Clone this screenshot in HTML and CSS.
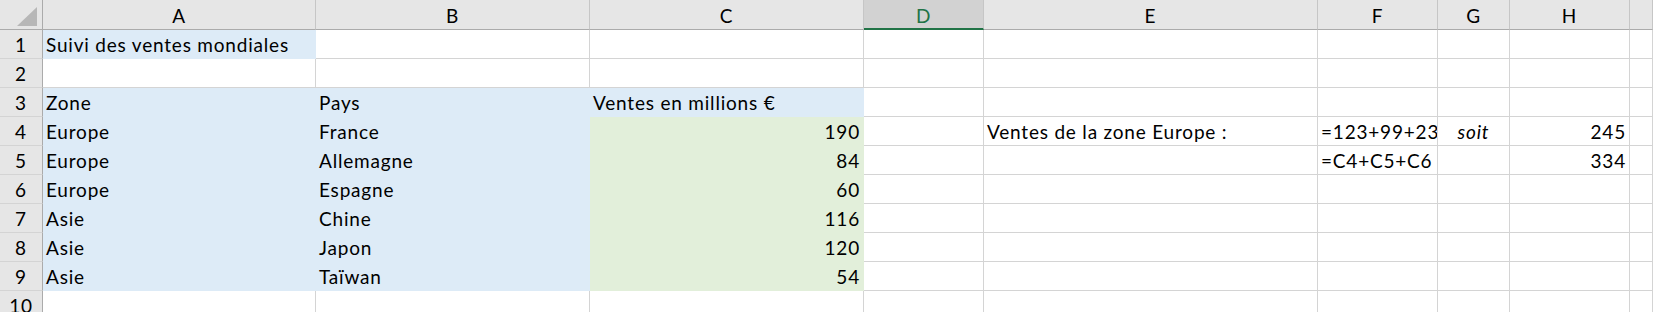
FILE: index.html
```html
<!DOCTYPE html>
<html lang="fr">
<head>
    <meta charset="UTF-8">
    <title>Suivi des ventes mondiales</title>
    <link rel="stylesheet" href="styles.css">
</head>
<body>
    <div class="sheet">
        <!-- column headers -->
        <div class="corner"><span class="corner-mark"></span></div>
        <div class="col-head">A</div>
        <div class="col-head">B</div>
        <div class="col-head">C</div>
        <div class="col-head selected">D</div>
        <div class="col-head">E</div>
        <div class="col-head">F</div>
        <div class="col-head">G</div>
        <div class="col-head">H</div>
        <div class="col-head"></div>

        <!-- 1 -->
        <div class="row-head">1</div>
        <div class="cell blue">Suivi des ventes mondiales</div>
        <div class="cell"></div>
        <div class="cell"></div>
        <div class="cell"></div>
        <div class="cell"></div>
        <div class="cell"></div>
        <div class="cell"></div>
        <div class="cell"></div>
        <div class="cell"></div>

        <!-- 2 -->
        <div class="row-head">2</div>
        <div class="cell"></div>
        <div class="cell"></div>
        <div class="cell"></div>
        <div class="cell"></div>
        <div class="cell"></div>
        <div class="cell"></div>
        <div class="cell"></div>
        <div class="cell"></div>
        <div class="cell"></div>

        <!-- 3 -->
        <div class="row-head">3</div>
        <div class="cell blue">Zone</div>
        <div class="cell blue">Pays</div>
        <div class="cell blue">Ventes en millions €</div>
        <div class="cell"></div>
        <div class="cell"></div>
        <div class="cell"></div>
        <div class="cell"></div>
        <div class="cell"></div>
        <div class="cell"></div>

        <!-- 4 -->
        <div class="row-head">4</div>
        <div class="cell blue">Europe</div>
        <div class="cell blue">France</div>
        <div class="cell green num">190</div>
        <div class="cell"></div>
        <div class="cell">Ventes de la zone Europe :</div>
        <div class="cell">=123+99+23</div>
        <div class="cell italic">soit</div>
        <div class="cell num">245</div>
        <div class="cell"></div>

        <!-- 5 -->
        <div class="row-head">5</div>
        <div class="cell blue">Europe</div>
        <div class="cell blue">Allemagne</div>
        <div class="cell green num">84</div>
        <div class="cell"></div>
        <div class="cell"></div>
        <div class="cell">=C4+C5+C6</div>
        <div class="cell"></div>
        <div class="cell num">334</div>
        <div class="cell"></div>

        <!-- 6 -->
        <div class="row-head">6</div>
        <div class="cell blue">Europe</div>
        <div class="cell blue">Espagne</div>
        <div class="cell green num">60</div>
        <div class="cell"></div>
        <div class="cell"></div>
        <div class="cell"></div>
        <div class="cell"></div>
        <div class="cell"></div>
        <div class="cell"></div>

        <!-- 7 -->
        <div class="row-head">7</div>
        <div class="cell blue">Asie</div>
        <div class="cell blue">Chine</div>
        <div class="cell green num">116</div>
        <div class="cell"></div>
        <div class="cell"></div>
        <div class="cell"></div>
        <div class="cell"></div>
        <div class="cell"></div>
        <div class="cell"></div>

        <!-- 8 -->
        <div class="row-head">8</div>
        <div class="cell blue">Asie</div>
        <div class="cell blue">Japon</div>
        <div class="cell green num">120</div>
        <div class="cell"></div>
        <div class="cell"></div>
        <div class="cell"></div>
        <div class="cell"></div>
        <div class="cell"></div>
        <div class="cell"></div>

        <!-- 9 -->
        <div class="row-head">9</div>
        <div class="cell blue">Asie</div>
        <div class="cell blue">Taïwan</div>
        <div class="cell green num">54</div>
        <div class="cell"></div>
        <div class="cell"></div>
        <div class="cell"></div>
        <div class="cell"></div>
        <div class="cell"></div>
        <div class="cell"></div>

        <!-- 10 -->
        <div class="row-head">10</div>
        <div class="cell"></div>
        <div class="cell"></div>
        <div class="cell"></div>
        <div class="cell"></div>
        <div class="cell"></div>
        <div class="cell"></div>
        <div class="cell"></div>
        <div class="cell"></div>
        <div class="cell"></div>
    </div>
</body>
</html>
```

FILE: styles.css
```css
body {
    margin: 0;
    background-color: #ffffff;
    overflow: hidden;
    font-family: "Lato", "Open Sans", sans-serif;
    font-size: 19px;
    letter-spacing: 0.8px;
    color: #000000;
}

.sheet {
    display: grid;
    grid-template-columns: 43px 273px 274px 274px 120px 334px 120px 72px 120px 1fr;
    grid-template-rows: 30px repeat(10, 29px);
    width: 1653px;
}

.corner,
.col-head,
.row-head,
.cell {
    box-sizing: border-box;
    display: flex;
    align-items: flex-end;
    padding-bottom: 2px;
    white-space: nowrap;
    overflow: hidden;
}

.corner {
    justify-content: flex-end;
    padding: 0 5px 3px 0;
    background-color: #e6e6e6;
    border-right: 1px solid #ababab;
    border-bottom: 1px solid #ababab;
}

.corner-mark {
    width: 20px;
    height: 19px;
    background-color: #b7b7b7;
    clip-path: polygon(100% 0, 100% 100%, 0 100%);
}

.col-head {
    justify-content: center;
    background-color: #e6e6e6;
    border-right: 1px solid #c6c6c6;
    border-bottom: 1px solid #ababab;
}

.col-head.selected {
    background-color: #d2d2d2;
    color: #217346;
    border-bottom: 2px solid #217346;
    padding-bottom: 1px;
}

.row-head {
    justify-content: center;
    background-color: #e6e6e6;
    border-right: 1px solid #ababab;
    border-bottom: 1px solid #d4d4d4;
}

.cell {
    padding-left: 3px;
    padding-right: 3px;
    border-right: 1px solid #d4d4d4;
    border-bottom: 1px solid #d4d4d4;
}

/* filled cells hide their gridlines */
.cell.blue {
    background-color: #ddebf7;
    border-color: #ddebf7;
}

.cell.green {
    background-color: #e2efda;
    border-color: #e2efda;
}

.num {
    justify-content: flex-end;
}

.italic {
    justify-content: center;
    font-style: italic;
}
```
